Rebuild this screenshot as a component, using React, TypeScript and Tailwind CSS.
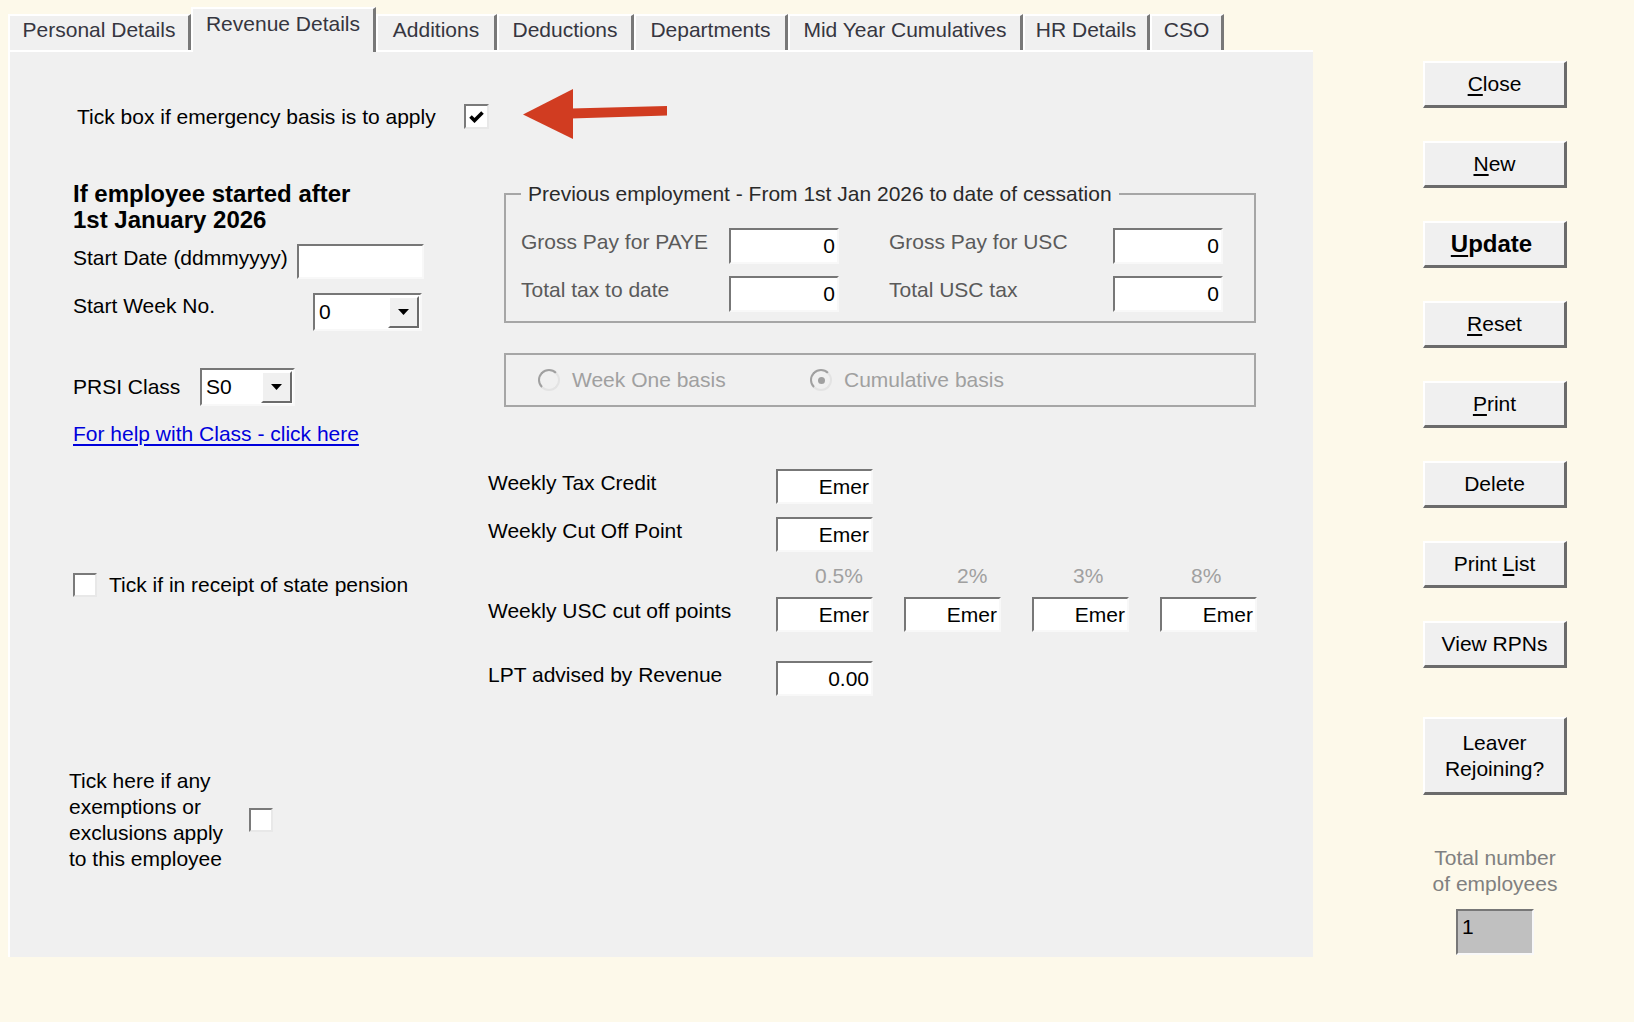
import type { ReactNode } from 'react';

const tabs: { label: string; w: string; active?: boolean }[] = [
  { label: 'Personal Details', w: 'w-[183px]' },
  { label: 'Revenue Details', w: 'w-[185px]', active: true },
  { label: 'Additions', w: 'w-[121px]' },
  { label: 'Deductions', w: 'w-[137px]' },
  { label: 'Departments', w: 'w-[154px]' },
  { label: 'Mid Year Cumulatives', w: 'w-[235px]' },
  { label: 'HR Details', w: 'w-[127px]' },
  { label: 'CSO', w: 'w-[74px]' },
];

// percent captions sit a little off-centre above each USC box
const bands = [
  { label: '0.5%', pad: 'pl-[39px]' },
  { label: '2%', pad: 'pl-[53px]' },
  { label: '3%', pad: 'pl-[41px]' },
  { label: '8%', pad: 'pl-[31px]' },
];

function CheckBox({ checked, className = '' }: { checked?: boolean; className?: string }) {
  return (
    <div
      className={`${className} w-[24px] h-[24px] shrink-0 bg-white border-2 border-t-[#7a7a7a] border-l-[#7a7a7a] border-b-[#e8e8e8] border-r-[#e8e8e8] flex items-center justify-center`}
    >
      {checked && (
        <svg width="15" height="12" viewBox="0 0 15 12">
          <path d="M1.5 5.5 L5.5 9.5 L13.5 1.5" stroke="#000" strokeWidth="3.6" fill="none" />
        </svg>
      )}
    </div>
  );
}

function Box({ className, value, left }: { className: string; value?: string; left?: boolean }) {
  return (
    <div
      className={`${className} shrink-0 bg-white border-2 border-t-[#777] border-l-[#777] border-b-[#f8f8f8] border-r-[#f8f8f8] flex items-center ${
        left ? 'justify-start pl-[3px]' : 'justify-end pr-[2px]'
      }`}
    >
      {value}
    </div>
  );
}

function Combo({ className, value }: { className: string; value: string }) {
  return (
    <div
      className={`${className} shrink-0 flex bg-white border-2 border-t-[#777] border-l-[#777] border-b-[#f8f8f8] border-r-[#f8f8f8]`}
    >
      <span className="flex-1 pl-[4px] flex items-center">{value}</span>
      <div className="w-[31px] my-[1px] mr-[1px] bg-[#f0f0f0] border-2 border-t-white border-l-white border-b-[#6b6b6b] border-r-[#6b6b6b] flex items-center justify-center">
        <svg width="11" height="6" viewBox="0 0 11 6">
          <path d="M0 0 H11 L5.5 6 Z" fill="#000" />
        </svg>
      </div>
    </div>
  );
}

function Radio({ checked }: { checked?: boolean }) {
  return (
    <div className="w-[22px] h-[22px] shrink-0 rounded-full border-2 border-t-[#a0a0a0] border-l-[#a0a0a0] border-b-[#e3e3e3] border-r-[#e3e3e3] bg-[#f0f0f0] flex items-center justify-center">
      {checked && <div className="w-[7px] h-[7px] rounded-full bg-[#a0a0a0]" />}
    </div>
  );
}

function SideButton({ children, tall, bold }: { children: ReactNode; tall?: boolean; bold?: boolean }) {
  return (
    <button
      className={`w-[144px] ${tall ? 'h-[78px] leading-[26px]' : 'h-[47px]'} ${
        bold ? 'font-bold text-[24px] pr-[6px]' : ''
      } bg-[#f0f0f0] border-t-2 border-l-2 border-t-white border-l-white border-b-[3px] border-r-[3px] border-b-[#6b6b6b] border-r-[#6b6b6b] flex items-center justify-center text-center text-black`}
    >
      <span>{children}</span>
    </button>
  );
}

function U({ children }: { children: ReactNode }) {
  return <span className="underline underline-offset-[3px] decoration-[2px]">{children}</span>;
}

export default function App() {
  return (
    <div className="min-h-screen bg-[#fdf9ea] flex items-start font-['Liberation_Sans',sans-serif] text-[21px] leading-[28px] text-black">
      {/* ─── TABBED FORM ─── */}
      <div className="ml-[8px] mt-[7px] w-[1305px]">
        <div className="flex items-end h-[43px]">
          {tabs.map((t) => (
            <div
              key={t.label}
              className={`${t.w} ${
                t.active ? 'h-[45px] -mb-[2px] pt-[3px] z-10' : 'h-[36px] pt-[2px]'
              } relative shrink-0 flex justify-center bg-[#f0f0f0] border-t-2 border-l-2 border-t-white border-l-white border-r-[3px] border-r-[#787878] text-[21px] leading-[24px] text-[#363640]`}
            >
              {t.label}
            </div>
          ))}
        </div>

        <div className="h-[907px] bg-[#f0f0f0] border-t-2 border-l-2 border-white">
          {/* emergency basis */}
          <div className="mt-[52px] ml-[67px] flex items-center h-[25px]">
            <span className="w-[387px] shrink-0 whitespace-nowrap">Tick box if emergency basis is to apply</span>
            <CheckBox checked className="!w-[25px] !h-[25px]" />
            <svg className="ml-[34px] shrink-0" width="144" height="56" viewBox="0 0 144 56">
              <polygon points="0,25.5 50,0 50,50" fill="#d13c21" />
              <polygon points="48,19.5 144,17 144,26.5 48,29.5" fill="#d13c21" />
            </svg>
          </div>

          <div className="mt-[51px] flex">
            {/* ─── LEFT COLUMN ─── */}
            <div className="ml-[63px] w-[415px] shrink-0">
              <div className="pt-[1px] font-bold text-[24px] leading-[26px]">
                If employee started after
                <br />
                1st January 2026
              </div>

              <div className="mt-[11px] flex items-start">
                <span className="w-[224px] shrink-0 whitespace-nowrap">Start Date (ddmmyyyy)</span>
                <Box className="w-[127px] h-[35px]" />
              </div>

              <div className="mt-[14px] flex items-start">
                <span className="w-[240px] shrink-0 -mt-[1px]">Start Week No.</span>
                <Combo className="w-[109px] h-[38px]" value="0" />
              </div>

              <div className="mt-[37px] flex items-center">
                <span className="w-[127px] shrink-0 whitespace-nowrap">PRSI Class</span>
                <Combo className="w-[95px] h-[38px]" value="S0" />
              </div>

              <a className="mt-[14px] block text-[#0000dc] underline underline-offset-[3px] whitespace-nowrap">
                For help with Class - click here
              </a>

              <div className="mt-[125px] flex items-center h-[24px]">
                <CheckBox />
                <span className="ml-[12px] whitespace-nowrap">Tick if in receipt of state pension</span>
              </div>

              <div className="mt-[171px] -ml-[4px] flex items-center">
                <span className="w-[180px] shrink-0 leading-[26px] whitespace-nowrap">
                  Tick here if any
                  <br />
                  exemptions or
                  <br />
                  exclusions apply
                  <br />
                  to this employee
                </span>
                <CheckBox />
              </div>
            </div>

            {/* ─── RIGHT COLUMN ─── */}
            <div className="w-[772px] shrink-0">
              <fieldset className="ml-[16px] w-[752px] border-2 border-[#a6a6a6] pt-[20px] pb-[9px] pl-[15px]">
                <legend className="ml-0 px-[7px] leading-[28px] text-[#2a2a2a] whitespace-nowrap">
                  Previous employment - From 1st Jan 2026 to date of cessation
                </legend>
                <div className="flex items-start h-[36px]">
                  <span className="w-[208px] shrink-0 text-[#5a5a5a] whitespace-nowrap">Gross Pay for PAYE</span>
                  <Box className="w-[110px] h-[36px]" value="0" />
                  <span className="ml-[50px] w-[224px] shrink-0 text-[#5a5a5a] whitespace-nowrap">Gross Pay for USC</span>
                  <Box className="w-[110px] h-[36px]" value="0" />
                </div>
                <div className="mt-[12px] flex items-start h-[36px]">
                  <span className="w-[208px] shrink-0 text-[#5a5a5a] whitespace-nowrap">Total tax to date</span>
                  <Box className="w-[110px] h-[36px]" value="0" />
                  <span className="ml-[50px] w-[224px] shrink-0 text-[#5a5a5a] whitespace-nowrap">Total USC tax</span>
                  <Box className="w-[110px] h-[36px]" value="0" />
                </div>
              </fieldset>

              <div className="mt-[30px] ml-[16px] w-[752px] h-[54px] border-2 border-[#a6a6a6] flex items-center pl-[32px] text-[#a0a0a0]">
                <div className="w-[272px] flex items-center">
                  <Radio />
                  <span className="ml-[12px]">Week One basis</span>
                </div>
                <div className="flex items-center">
                  <Radio checked />
                  <span className="ml-[12px]">Cumulative basis</span>
                </div>
              </div>

              <div className="mt-[62px] flex items-start">
                <span className="w-[288px] shrink-0">Weekly Tax Credit</span>
                <Box className="w-[97px] h-[35px]" value="Emer" />
              </div>
              <div className="mt-[13px] flex items-start">
                <span className="w-[288px] shrink-0">Weekly Cut Off Point</span>
                <Box className="w-[97px] h-[35px]" value="Emer" />
              </div>

              <div className="mt-[10px] pl-[288px] flex gap-[31px] text-[#a0a0a0]">
                {bands.map((b) => (
                  <span key={b.label} className={`w-[97px] ${b.pad}`}>
                    {b.label}
                  </span>
                ))}
              </div>
              <div className="mt-[7px] flex items-start">
                <span className="w-[288px] shrink-0 whitespace-nowrap">Weekly USC cut off points</span>
                <div className="flex gap-[31px]">
                  {bands.map((b) => (
                    <Box key={b.label} className="w-[97px] h-[35px]" value="Emer" />
                  ))}
                </div>
              </div>

              <div className="mt-[29px] flex items-start">
                <span className="w-[288px] shrink-0 whitespace-nowrap">LPT advised by Revenue</span>
                <Box className="w-[97px] h-[35px]" value="0.00" />
              </div>
            </div>
          </div>
        </div>
      </div>

      {/* ─── ACTION BUTTONS ─── */}
      <aside className="ml-[110px] mt-[61px] w-[144px] shrink-0 flex flex-col gap-[33px]">
        <SideButton>
          <U>C</U>lose
        </SideButton>
        <SideButton>
          <U>N</U>ew
        </SideButton>
        <SideButton bold>
          <U>U</U>pdate
        </SideButton>
        <SideButton>
          <U>R</U>eset
        </SideButton>
        <SideButton>
          <U>P</U>rint
        </SideButton>
        <SideButton>Delete</SideButton>
        <SideButton>
          Print <U>L</U>ist
        </SideButton>
        <SideButton>View RPNs</SideButton>
        <div className="mt-[16px]">
          <SideButton tall>
            Leaver
            <br />
            Rejoining?
          </SideButton>
        </div>
        <div className="-mt-[33px] pt-[50px] text-center leading-[26px] text-[#808080] whitespace-nowrap">
          Total number
          <br />
          of employees
        </div>
        <div className="-mt-[21px] mx-auto w-[78px] h-[46px] bg-[#c0c0c0] border-2 border-t-[#777] border-l-[#777] border-b-[#f8f8f8] border-r-[#f8f8f8] pl-[4px] pt-[2px]">
          1
        </div>
      </aside>
    </div>
  );
}
